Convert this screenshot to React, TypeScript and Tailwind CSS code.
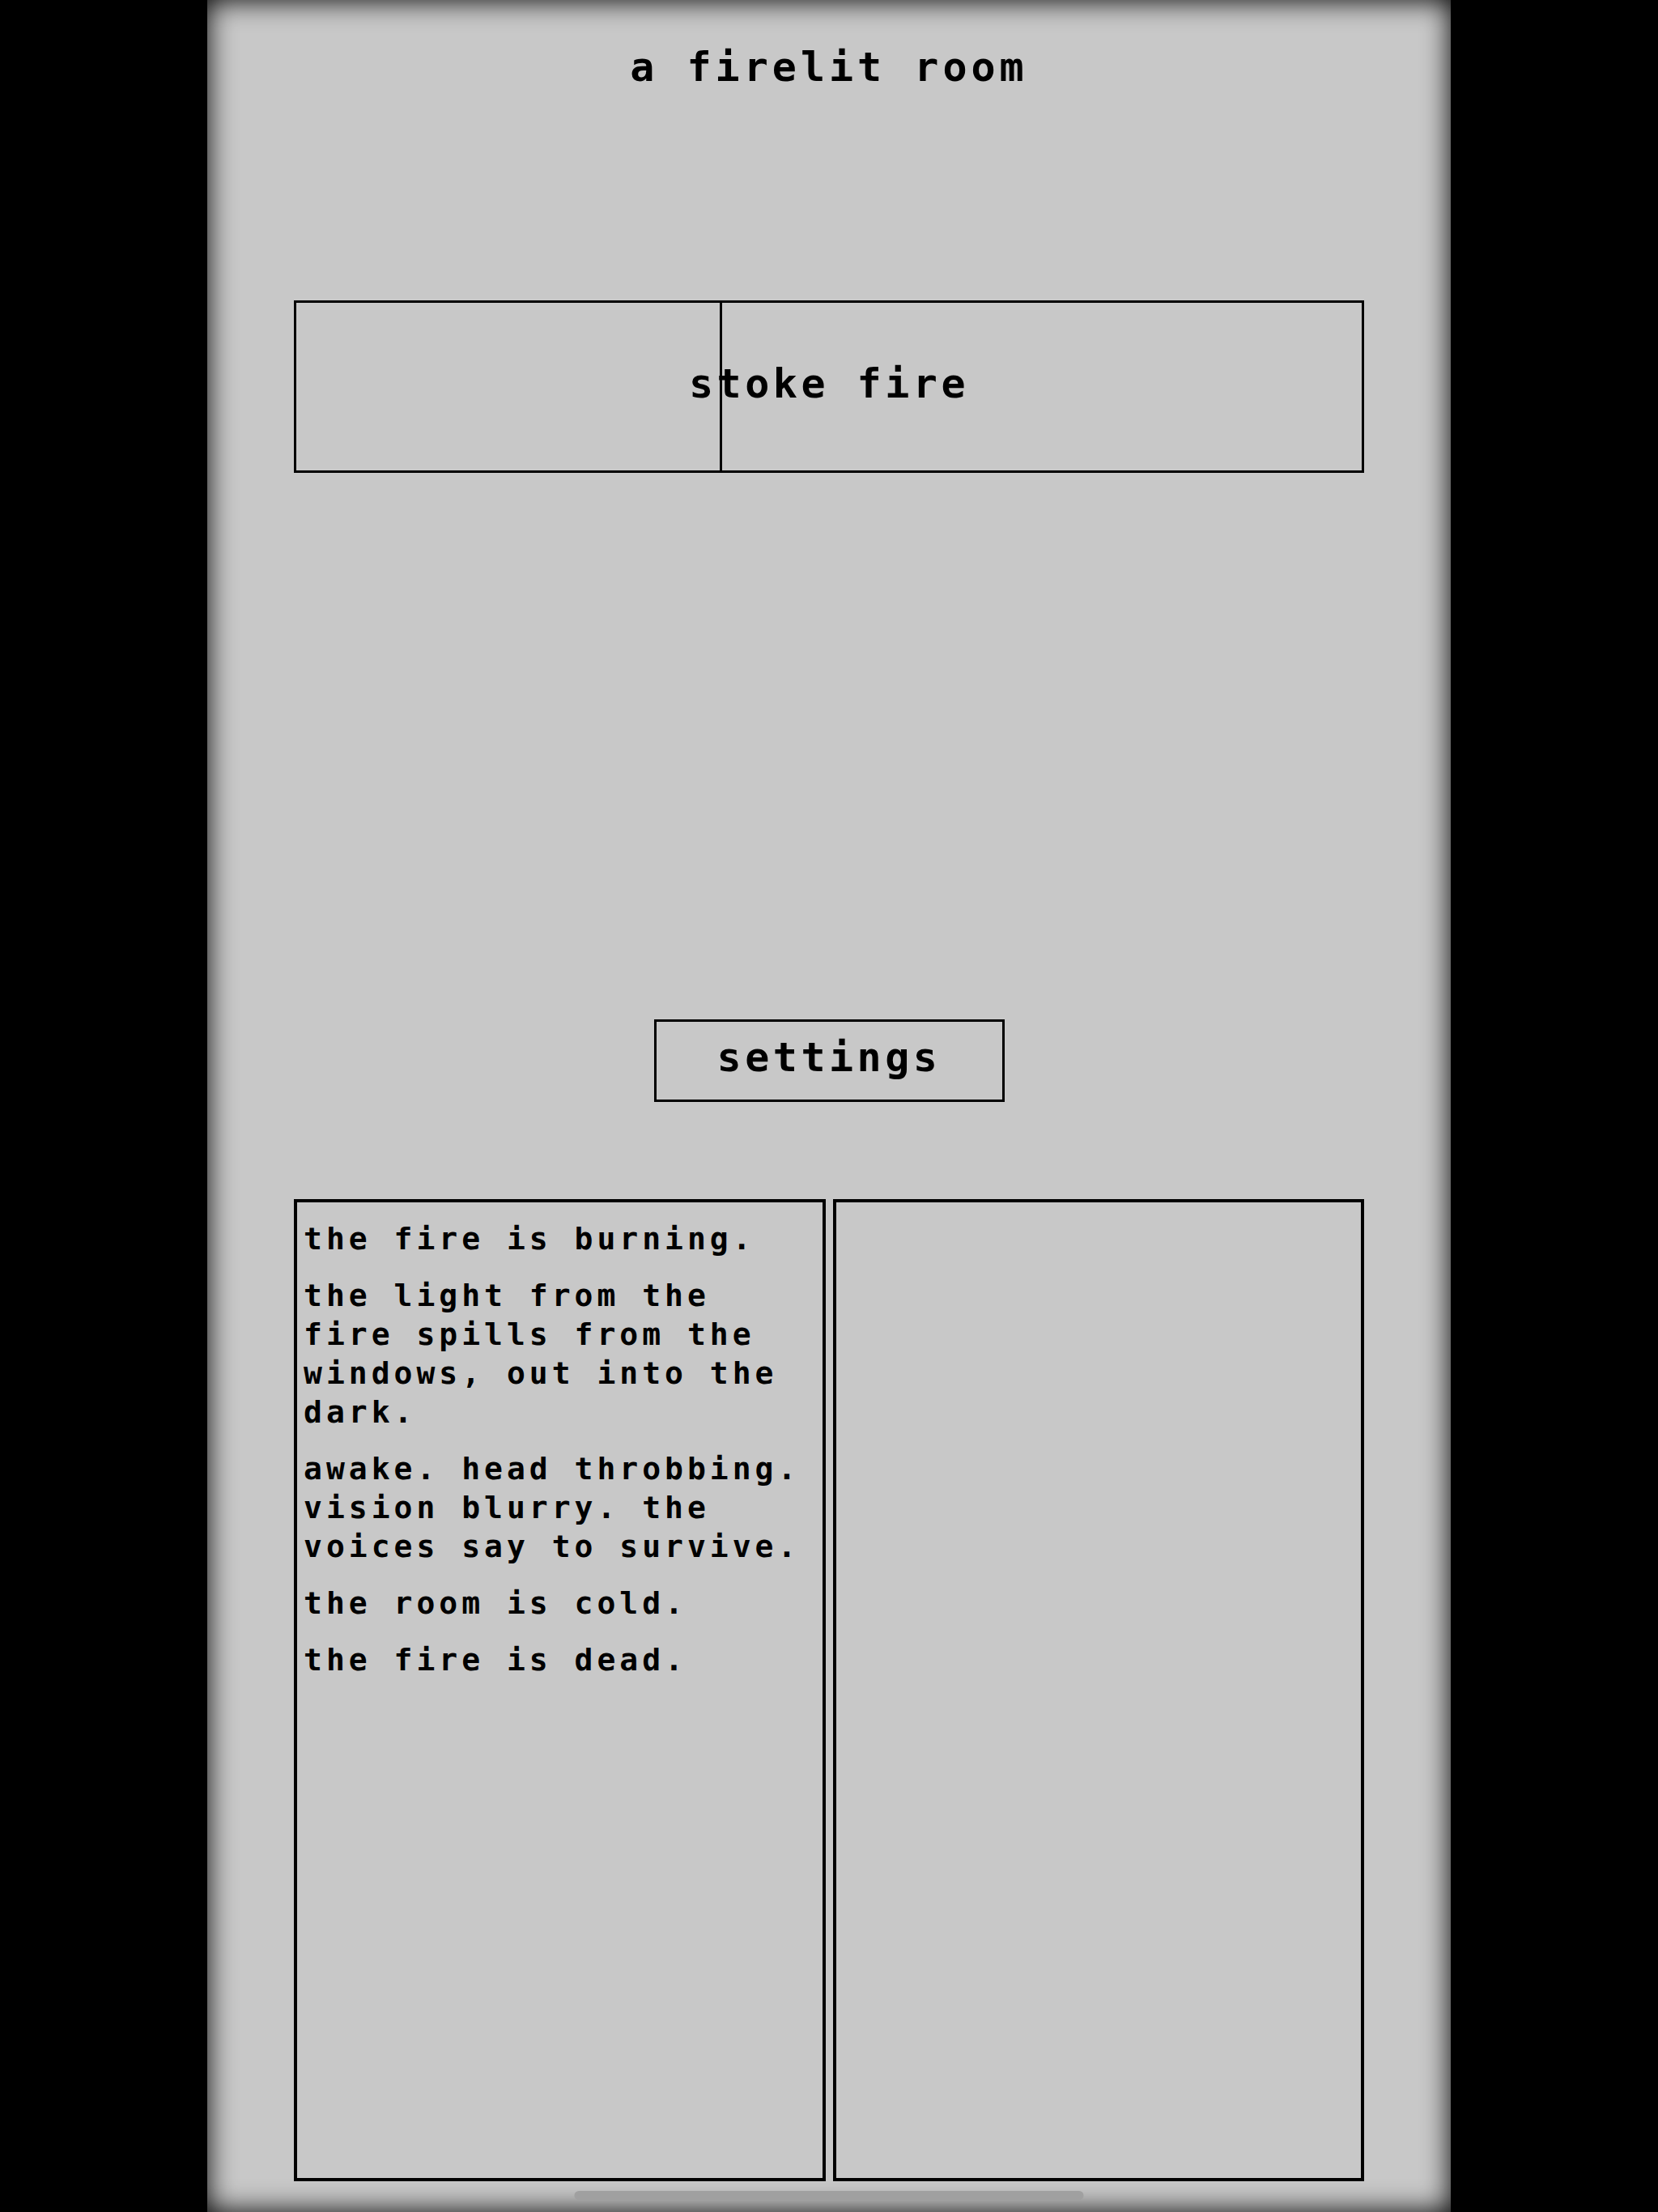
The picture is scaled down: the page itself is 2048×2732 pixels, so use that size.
const log = [
  "the fire is burning.",
  "the light from the fire spills from the windows, out into the dark.",
  "awake. head throbbing. vision blurry. the voices say to survive.",
  "the room is cold.",
  "the fire is dead.",
];

export default function App() {
  return (
    <div className="flex h-[2732px] w-full justify-center bg-black font-['DejaVu_Sans_Mono',monospace] font-bold text-black">
      <div className="relative flex h-full w-[1536px] flex-col items-center bg-[#c8c8c8] shadow-[inset_0_0_34px_#000]">
        {/* location header */}
        <h1 className="mt-[53px] text-[50px] leading-[60px] tracking-[5px] font-bold">
          a firelit room
        </h1>

        {/* stoke fire, mid cooldown */}
        <div
          role="button"
          className="relative mt-[258px] flex h-[213px] w-[1322px] cursor-pointer justify-center border-[3px] border-black pt-[70px]"
        >
          <div className="absolute top-0 bottom-0 left-0 w-[526px] border-r-[3px] border-black" />
          <span className="relative text-[50px] leading-[60px] tracking-[4.5px]">stoke fire</span>
        </div>

        <div
          role="button"
          className="mt-[675px] flex h-[102px] w-[433px] cursor-pointer justify-center border-[3px] border-black pt-[14px]"
        >
          <span className="text-[50px] leading-[60px] tracking-[4.5px]">settings</span>
        </div>

        {/* notifications + stores */}
        <div className="mt-[120px] grid h-[1213px] w-[1322px] grid-cols-2 gap-[9px]">
          <div className="flex flex-col gap-[22px] border-4 border-black pt-[21px] pr-[8px] pl-[8px]">
            {log.map((line, i) => (
              <p key={i} className="text-[38px] leading-[48px] tracking-[5px]">
                {line}
              </p>
            ))}
          </div>
          <div className="border-4 border-black" />
        </div>

        {/* home indicator */}
        <div className="absolute bottom-[15px] left-1/2 h-[11px] w-[629px] -translate-x-1/2 rounded-full bg-[#a0a0a0]" />
      </div>
    </div>
  );
}
